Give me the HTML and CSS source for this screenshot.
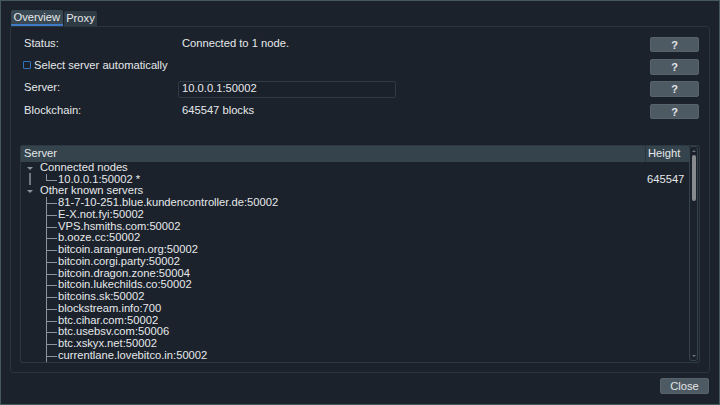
FILE: index.html
```html
<!DOCTYPE html>
<html>
<head>
<meta charset="utf-8">
<link rel="stylesheet" href="styles.css">
</head>
<body>
<div class="window">
  <div class="tabs">
    <div class="tab active">Overview</div>
    <div class="tab">Proxy</div>
  </div>
  <div class="panel">
    <div class="form">
      <div class="lbl">Status:</div>
      <div class="val">Connected to 1 node.</div>
      <div></div>
      <button class="help">?</button>

      <div class="lbl check-row"><span class="checkbox"></span>Select server automatically</div>
      <div></div>
      <div></div>
      <button class="help">?</button>

      <div class="lbl">Server:</div>
      <div class="input">10.0.0.1:50002</div>
      <div></div>
      <button class="help">?</button>

      <div class="lbl">Blockchain:</div>
      <div class="val">645547 blocks</div>
      <div></div>
      <button class="help">?</button>
    </div>

    <div class="tree">
      <div class="tree-main">
        <div class="thead">
          <div class="th th-server">Server</div>
          <div class="th th-height">Height</div>
        </div>
        <div class="tbody">
          <div class="row top"><span class="c1"><span class="arrow"></span></span><span class="name">Connected nodes</span><span class="h"></span></div>
          <div class="row child"><span class="c1 vline"></span><span class="c2 last"></span><span class="name">10.0.0.1:50002 *</span><span class="h">645547</span></div>
          <div class="row top"><span class="c1"><span class="arrow"></span></span><span class="name">Other known servers</span><span class="h"></span></div>
          <div class="row child"><span class="c1"></span><span class="c2"></span><span class="name">81-7-10-251.blue.kundencontroller.de:50002</span><span class="h"></span></div>
          <div class="row child"><span class="c1"></span><span class="c2"></span><span class="name">E-X.not.fyi:50002</span><span class="h"></span></div>
          <div class="row child"><span class="c1"></span><span class="c2"></span><span class="name">VPS.hsmiths.com:50002</span><span class="h"></span></div>
          <div class="row child"><span class="c1"></span><span class="c2"></span><span class="name">b.ooze.cc:50002</span><span class="h"></span></div>
          <div class="row child"><span class="c1"></span><span class="c2"></span><span class="name">bitcoin.aranguren.org:50002</span><span class="h"></span></div>
          <div class="row child"><span class="c1"></span><span class="c2"></span><span class="name">bitcoin.corgi.party:50002</span><span class="h"></span></div>
          <div class="row child"><span class="c1"></span><span class="c2"></span><span class="name">bitcoin.dragon.zone:50004</span><span class="h"></span></div>
          <div class="row child"><span class="c1"></span><span class="c2"></span><span class="name">bitcoin.lukechilds.co:50002</span><span class="h"></span></div>
          <div class="row child"><span class="c1"></span><span class="c2"></span><span class="name">bitcoins.sk:50002</span><span class="h"></span></div>
          <div class="row child"><span class="c1"></span><span class="c2"></span><span class="name">blockstream.info:700</span><span class="h"></span></div>
          <div class="row child"><span class="c1"></span><span class="c2"></span><span class="name">btc.cihar.com:50002</span><span class="h"></span></div>
          <div class="row child"><span class="c1"></span><span class="c2"></span><span class="name">btc.usebsv.com:50006</span><span class="h"></span></div>
          <div class="row child"><span class="c1"></span><span class="c2"></span><span class="name">btc.xskyx.net:50002</span><span class="h"></span></div>
          <div class="row child"><span class="c1"></span><span class="c2"></span><span class="name">currentlane.lovebitco.in:50002</span><span class="h"></span></div>
        </div>
      </div>
      <div class="vscroll">
        <span class="sarrow up"></span>
        <span class="handle"></span>
        <span class="sarrow down"></span>
      </div>
    </div>
  </div>
  <div class="footer">
    <button class="btn-close">Close</button>
  </div>
</div>
</body>
</html>
```

FILE: styles.css
```css
* { box-sizing: border-box; }
html, body {
  margin: 0;
  padding: 0;
  background: #1b222c;
}
body {
  font-family: "Liberation Sans", Arial, sans-serif;
  font-size: 11.2px;
  color: #e6e8ea;
}
.window {
  width: 720px;
  height: 405px;
  border: 1px solid #45585c;
  padding: 9px 9px 0 9px;
  background: #1b222c;
}
.tabs {
  display: flex;
  align-items: flex-end;
  height: 16px;
  margin-left: 1px;
}
.tab {
  height: 15px;
  line-height: 14px;
  padding: 0 2.5px;
  background: #2e3a44;
  border-radius: 2px 2px 0 0;
  margin-right: 1px;
  color: #e6e8ea;
}
.tab.active {
  height: 16px;
  line-height: 15px;
  background: #3a4853;
  border-bottom: 2px solid #3d7cc4;
}
.panel {
  height: 347px;
  border: 1px solid #2a3540;
  border-radius: 3px;
  padding: 6.5px 0 0 0;
}
.form {
  display: grid;
  grid-template-columns: 154px 218px 1fr 49px;
  grid-auto-rows: 22.3px;
  align-items: center;
  padding: 0 10px 0 13px;
}
.lbl { white-space: nowrap; padding-bottom: 4px; }
.val { padding-left: 4px; white-space: nowrap; padding-bottom: 4px; }
.check-row {
  display: flex;
  align-items: center;
  margin-left: -1px;
}
.checkbox {
  width: 8px;
  height: 8px;
  border: 1px solid #2f73b8;
  border-radius: 1px;
  margin-right: 3px;
  background: #1b222c;
}
.input {
  height: 17px;
  line-height: 13px;
  border: 1px solid #2e3a44;
  border-radius: 2px;
  padding-left: 3px;
  background: #1a212a;
}
.help {
  height: 15.5px;
  width: 49px;
  padding: 0;
  border: 1px solid #56636d;
  border-radius: 2px;
  background: #4d5a64;
  color: #e2e4e6;
  font-family: "Liberation Sans", Arial, sans-serif;
  font-size: 11px;
  font-weight: bold;
  line-height: 12px;
}
.tree {
  display: flex;
  margin: 22.2px 9px 0 9px;
  height: 218px;
  border: 1px solid #2c3842;
  border-radius: 2px;
}
.tree-main {
  flex: 1;
  display: flex;
  flex-direction: column;
  min-width: 0;
}
.thead {
  display: flex;
  height: 16px;
  background: #34434c;
}
.th {
  line-height: 15px;
  padding-left: 3px;
}
.th-server {
  flex: 1;
  border-right: 1px solid #28333c;
}
.th-height {
  width: 43px;
  padding-left: 2px;
}
.tbody {
  flex: 1;
  overflow: hidden;
}
.row {
  display: flex;
  height: 11.75px;
  line-height: 11.75px;
  white-space: nowrap;
}
.row .name { flex: 1; }
.row .h { width: 43px; padding-left: 1px; }
.c1 {
  width: 19px;
  position: relative;
  flex: none;
}
.c2 {
  width: 18px;
  position: relative;
  flex: none;
}
.arrow {
  position: absolute;
  left: 6px;
  top: 5px;
  width: 0;
  height: 0;
  border-left: 3px solid transparent;
  border-right: 3px solid transparent;
  border-top: 3px solid #8b949a;
}
.c1.vline::before {
  content: "";
  position: absolute;
  left: 8px;
  top: -1px;
  bottom: 0;
  width: 2px;
  background: #6f787e;
}
.c2::before {
  content: "";
  position: absolute;
  left: 6px;
  top: 0;
  bottom: 0;
  width: 1px;
  background: #8d9499;
}
.c2.last::before {
  bottom: 50%;
  top: 0;
}
.c2::after {
  content: "";
  position: absolute;
  left: 6px;
  width: 11px;
  top: 6px;
  height: 1px;
  background: #8d9499;
}
.vscroll {
  position: relative;
  width: 9px;
  flex: none;
  margin: 0 1px 1px 0;
  border: 1px solid #37434c;
  border-radius: 3px;
}
.handle {
  position: absolute;
  left: 2px;
  top: 8px;
  width: 4px;
  height: 46px;
  border-radius: 2px;
  background: #888b8d;
}
.sarrow {
  position: absolute;
  left: 1.5px;
  width: 0;
  height: 0;
  border-left: 2.5px solid transparent;
  border-right: 2.5px solid transparent;
}
.sarrow.up {
  top: 3px;
  border-bottom: 2.5px solid #6c757b;
}
.sarrow.down {
  bottom: 3px;
  border-top: 2.5px solid #6c757b;
}
.footer {
  display: flex;
  justify-content: flex-end;
  padding-top: 5px;
  padding-right: 1px;
}
.btn-close {
  width: 49px;
  height: 16px;
  padding: 0;
  border: 1px solid #56636d;
  border-radius: 2px;
  background: #4d5a64;
  color: #e2e4e6;
  font-family: "Liberation Sans", Arial, sans-serif;
  font-size: 11.2px;
  line-height: 13px;
}
```
